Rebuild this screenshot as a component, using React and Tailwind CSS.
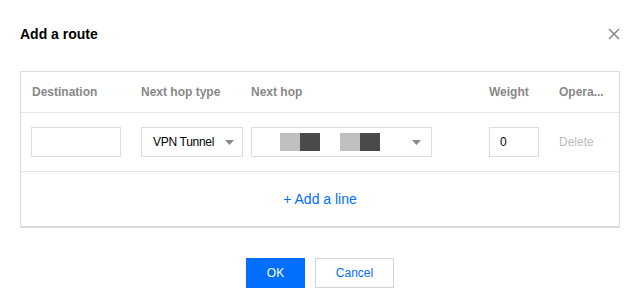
import React from "react";

function Caret() {
  return (
    <svg width="9" height="5" viewBox="0 0 9 5" className="shrink-0">
      <path d="M0 0 L9 0 L4.5 5 Z" fill="#888888" />
    </svg>
  );
}

export default function App() {
  return (
    <div
      className="w-[641px] h-[308px] bg-white px-[20px] pt-[24px]"
      style={{ fontFamily: '"Liberation Sans", Arial, sans-serif' }}
    >
      <div className="flex items-center justify-between h-[20px]">
        <div className="text-[14px] font-bold text-black leading-[20px]">Add a route</div>
        <svg width="12" height="12" viewBox="0 0 12 12" className="mr-[1px]">
          <path d="M1 1 L11 11 M11 1 L1 11" stroke="#888888" strokeWidth="1.5" />
        </svg>
      </div>

      <div className="mt-[27px] w-[600px] border border-[#dddddd] border-b-2 border-b-[#dcdcdc]">
        <div className="grid grid-cols-[110px_110px_238px_70px_70px] h-[41px] border-b border-[#e5e5e5] items-center text-[12px] font-bold text-[#888888]">
          <div className="pl-[11px]">Destination</div>
          <div className="pl-[10px]">Next hop type</div>
          <div className="pl-[10px]">Next hop</div>
          <div className="pl-[10px]">Weight</div>
          <div className="pl-[10px]">Opera...</div>
        </div>
        <div className="grid grid-cols-[110px_110px_238px_70px_70px] h-[59px] border-b border-[#e5e5e5] items-center text-[12px]">
          <div className="pl-[10px]">
            <div className="w-[90px] h-[30px] border border-[#dddddd]" />
          </div>
          <div className="pl-[10px]">
            <div className="w-[102px] h-[30px] border border-[#dddddd] flex items-center pl-[11px] text-[#000000] whitespace-nowrap">
              <span className="tracking-[-0.3px] shrink-0">VPN Tunnel</span>
              <span className="ml-[11px] shrink-0 flex">
                <Caret />
              </span>
            </div>
          </div>
          <div className="pl-[10px]">
            <div className="w-[181px] h-[30px] border border-[#dddddd] flex items-center pl-[28px] pr-[10px]">
              <div className="flex h-[18px] mt-[-1px]">
                <div className="w-[20px] bg-[#c0c0c0]" />
                <div className="w-[20px] bg-[#4a4a4a]" />
              </div>
              <div className="flex h-[18px] ml-[20px]">
                <div className="w-[20px] bg-[#c0c0c0]" />
                <div className="w-[20px] bg-[#4a4a4a]" />
              </div>
              <div className="ml-auto flex">
                <Caret />
              </div>
            </div>
          </div>
          <div className="pl-[10px]">
            <div className="w-[50px] h-[30px] border border-[#dddddd] flex items-center pl-[10px] text-black">0</div>
          </div>
          <div className="pl-[10px] text-[#bbbbbb]">Delete</div>
        </div>
        <div className="h-[54px] flex items-center justify-center text-[14px] text-[#006eff] pt-[1px]">
          + Add a line
        </div>
      </div>

      <div className="mt-[30px] flex justify-center gap-[10px] text-[12px] pr-[1px]">
        <div className="w-[59px] h-[30px] bg-[#006eff] text-white flex items-center justify-center">OK</div>
        <div className="w-[79px] h-[30px] border border-[#cfd5de] text-[#006eff] flex items-center justify-center">Cancel</div>
      </div>
    </div>
  );
}
